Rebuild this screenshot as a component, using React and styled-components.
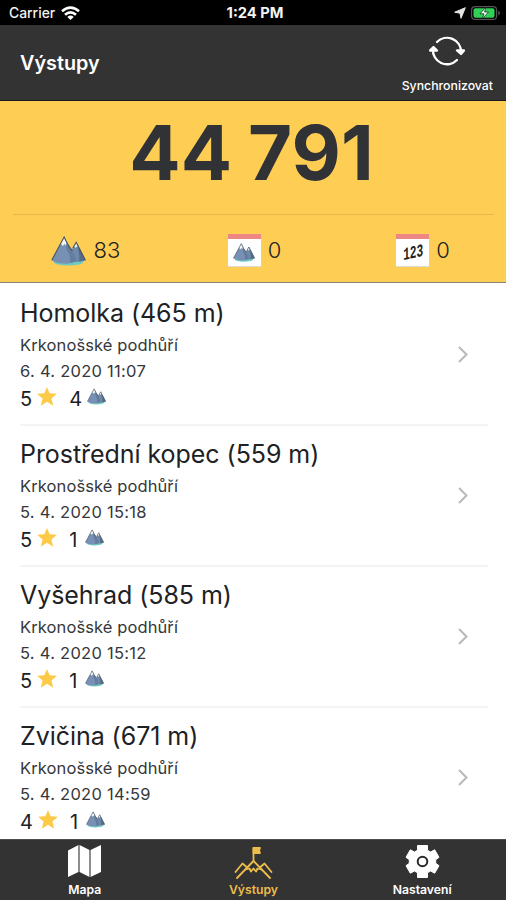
import React from 'react';
import styled, { createGlobalStyle } from 'styled-components';

const GlobalStyle = createGlobalStyle`
  * {
    box-sizing: border-box;
    margin: 0;
    padding: 0;
  }

  body {
    background: #fff;
    font-family: Inter, 'Liberation Sans', sans-serif;
    color: #202124;
  }
`;

const Screen = styled.div`
  width: 506px;
  height: 900px;
  display: flex;
  flex-direction: column;
  overflow: hidden;
  background: #fff;
`;

const StatusBar = styled.div`
  height: 25px;
  flex-shrink: 0;
  display: grid;
  grid-template-columns: 1fr auto 1fr;
  align-items: center;
  padding: 1px 5px 0 9px;
  background: #000;
  color: #f2f2f2;
  font-size: 13.9px;
  line-height: 20px;
`;

const Carrier = styled.div`
  display: flex;
  align-items: center;
  gap: 6px;
  font-weight: 500;
`;

const Clock = styled.div`
  font-weight: 700;
  font-size: 14.7px;
`;

const StatusIcons = styled.div`
  display: flex;
  align-items: center;
  justify-content: flex-end;
  gap: 5px;
`;

const Header = styled.header`
  height: 76px;
  flex-shrink: 0;
  display: flex;
  justify-content: space-between;
  padding: 0 13px 0 20px;
  background: #333;
  border-bottom: 1px solid #17161c;
  color: #fff;
`;

const PageTitle = styled.h1`
  padding-top: 26px;
  font-size: 19.8px;
  line-height: 24px;
  font-weight: 600;
`;

const SyncButton = styled.button`
  display: flex;
  flex-direction: column;
  align-items: center;
  gap: 10px;
  padding-top: 9px;
  border: 0;
  background: none;
  color: #fff;
  font: 500 12.3px/16px Inter, sans-serif;
`;

const Summary = styled.section`
  height: 182px;
  flex-shrink: 0;
  padding: 0 12px 0 13px;
  background: #fecd53;
  border-bottom: 1px solid #8d8374;
`;

const Score = styled.div`
  height: 114px;
  padding: 9px 4px 0 0;
  border-bottom: 1px solid #e5b948;
  font-size: 76px;
  line-height: 84px;
  font-weight: 700;
  word-spacing: -2px;
  text-align: center;
  color: #303236;
`;

const Stats = styled.div`
  display: grid;
  grid-template-columns: repeat(3, 1fr);
  margin: 0 -12px 0 -13px;
  height: 67px;
  padding-top: 4px;
`;

const Stat = styled.div`
  display: flex;
  align-items: center;
  justify-content: center;
  gap: 7px;
  padding-left: 3px;
  font-size: 22px;
  line-height: 30px;
  font-weight: 300;
`;

const StatValue = styled.span`
  padding-bottom: 1px;
`;

const List = styled.ul`
  flex: 1;
  min-height: 0;
  overflow: hidden;
  list-style: none;
  padding: 2px 18px 0 20px;
`;

const Ascent = styled.li`
  height: 141px;
  display: flex;
  align-items: center;
  justify-content: space-between;
  padding-right: 20px;
  border-bottom: 2px solid #f4f4f4;
`;

const AscentName = styled.h2`
  margin: -2px 0 2px;
  padding-top: 1px;
  font-size: 25px;
  line-height: 34px;
  letter-spacing: -0.05px;
  font-weight: 400;
`;

const AscentInfo = styled.p`
  font-size: 16.5px;
  line-height: 26px;
  letter-spacing: ${({ $spacing }) => $spacing || 0.1}px;
  color: #36373a;
`;

const Points = styled.div`
  display: flex;
  align-items: center;
  height: 28px;
  padding-top: 2px;
  font-size: 20px;
  line-height: 28px;
`;

const PointIcon = styled.span`
  display: flex;
  margin: 0 ${({ $right }) => $right || 0}px 5px 5px;
`;

const PeakCount = styled.span`
  min-width: 11px;
`;

const TabBar = styled.nav`
  height: 61px;
  flex-shrink: 0;
  display: grid;
  grid-template-columns: repeat(3, 1fr);
  background: #333;
  border-top: 1px solid #4e4e4e;
`;

const Tab = styled.a`
  display: flex;
  flex-direction: column;
  align-items: center;
  gap: 3px;
  padding: 4px 0 0 1px;
  color: ${({ $active }) => ($active ? '#edbd4b' : '#fff')};
  font-size: 12.2px;
  line-height: 16px;
  font-weight: 600;
`;

const WifiIcon = () => (
  <svg width="19" height="15" viewBox="0 0 19 15" fill="none" stroke="#fff" strokeWidth="2.6">
    <path d="M1 5.2Q9.5-2 18 5.2M4 8.7Q9.5 4 15 8.7" />
    <path d="M6.3 11Q9.5 8.2 12.7 11L9.5 14Z" fill="#fff" stroke="none" />
  </svg>
);

const LocationIcon = () => (
  <svg width="12" height="12" viewBox="0 0 12 12">
    <path d="M11.3.7 7 11.3 6 6.2.7 5.2Z" fill="#e3e3e3" stroke="#e3e3e3" strokeLinejoin="round" />
  </svg>
);

const BatteryIcon = () => (
  <svg width="30" height="14" viewBox="0 0 30 14">
    <rect x=".6" y=".6" width="25" height="12.8" rx="3.5" fill="none" stroke="#555" strokeWidth="1.2" />
    <rect x="2.5" y="2.3" width="21" height="9.4" rx="2" fill="#31d158" />
    <path d="M27.5 4.5Q30 7 27.5 9.5Z" fill="#777" />
    <path d="M15 1 9 7.8h4L11 13l6.5-7h-4Z" fill="#fff" stroke="#0c3518" strokeWidth=".8" />
  </svg>
);

const SyncIcon = () => (
  <svg width="36" height="34" viewBox="0 0 36 34" fill="none" stroke="#fff" strokeWidth="2.3" strokeLinecap="round" strokeLinejoin="round">
    <path d="M8 8A14 14 0 0 1 32 18M28 26A14 14 0 0 1 4 15" />
    <path d="M28 16.5h7L32 20ZM1 16.5h7L4.5 13Z" fill="#fff" />
  </svg>
);

const MountainIcon = ({ width = 35, height = 30 }) => (
  <svg width={width} height={height} viewBox="0 0 36 31">
    <ellipse cx="18" cy="26.5" rx="15.5" ry="4" fill="#6fcac1" />
    <path d="M18 20 26 6.5 35.5 25Q29 28 20 26Z" fill="#6e89ac" />
    <path d="M26 6.5 35.5 25 29 26Q30 17 26 6.5Z" fill="#526b87" />
    <path d="M.7 25 13.5 1Q18 11 22 15L26.5 25Q22 29 13 28.5 6 28.5.7 25Z" fill="#7890b4" />
    <path d="M13.5 1Q18 11 22 15l4.5 10q-3 3-7 3 1-8-3-13Z" fill="#647d9e" />
    <path d="m13.5 1-4.2 8 1.8-.5 1 2 1.7-2.5 1.6 2L16 7Z" fill="#f6f7f7" />
    <path d="m26 6.5-2.7 5 1.3-.5 1 1.5 1.2-1.8 1 .5Z" fill="#edf1f3" />
    <path d="M.7 25 13.5 1Q18 11 22 15M22.5 12.5l3.5-6L35.5 25" fill="none" stroke="#46545b" strokeWidth="1.1" />
  </svg>
);

const StarIcon = () => (
  <svg width="20" height="19" viewBox="0 0 19 18">
    <path d="m9.5 0 2.5 5.9 6.9.5-5.2 4.4 1.7 6.9-5.9-3.6-5.9 3.6 1.7-6.9L.1 6.4 7 5.9Z" fill="#fdca48" />
  </svg>
);

const Calendar = styled.div`
  width: 33px;
  height: 33px;
  display: flex;
  align-items: center;
  justify-content: center;
  background: #fff;
  border-top: 5px solid #ee8783;
  border-bottom: 1px solid #dedbd3;
`;

const CalendarDays = styled.span`
  font: 700 18px/20px 'Liberation Mono', monospace;
  color: #222;
  transform: scaleX(.62) skewY(-8deg);
`;

const ChevronIcon = () => (
  <svg width="10" height="17" viewBox="0 0 10 17" fill="none" stroke="#b9b9bb" strokeWidth="2">
    <path d="m1 1 7.5 7.5L1 16" />
  </svg>
);

const MapIcon = () => (
  <svg width="33" height="35" viewBox="0 0 33 35">
    <path d="M0 6.5 10.5 1v27L0 33ZM11.5 1l10 5v27l-10-5ZM22.5 6 33 1v27l-10.5 5Z" fill="#fff" />
    <path d="M11 1v27M22 6v27" stroke="#8b8b8b" strokeWidth="1.5" />
  </svg>
);

const SummitIcon = () => (
  <svg width="39" height="35" viewBox="0 0 39 35" fill="none" stroke="currentColor" strokeWidth="1.8" strokeLinecap="round" strokeLinejoin="round">
    <path d="M1.5 28 8.5 19.5l3.5 3M3 34 19.5 17 36 34M27 22.5l3.5-3 7 8.5" />
    <path d="m11.5 25.5 4-1 1.5 3 2.5-3 2.5 3 1.5-3 4 1M19.5 17V4" />
    <path d="M19.5 4h6.5l-1 2.3 1 2.7h-6.5Z" fill="currentColor" />
  </svg>
);

const SettingsIcon = () => (
  <svg width="35" height="35" viewBox="0 0 35 35">
    <path d="M12.5 1.5h10v4.7l3 1.8 4.2-2.2 4.3 7.5-3.3 2.4v3.6l3.3 2.4-4.3 7.5-4.2-2.2-3 1.8v4.7h-10v-4.7l-3-1.8-4.2 2.2L1 21.7l3.3-2.4v-3.6L1 13.3l4.3-7.5L9.5 8l3-1.8Z" fill="#fff" stroke="#fff" strokeLinejoin="round" />
    <circle cx="17.5" cy="17.5" r="4.8" fill="#fff" stroke="#292929" strokeWidth="2" />
  </svg>
);

const ascents = [
  { name: 'Homolka (465 m)', date: '6. 4. 2020 11:07', stars: 5, peaks: 4 },
  { name: 'Prostřední kopec (559 m)', date: '5. 4. 2020 15:18', stars: 5, peaks: 1 },
  { name: 'Vyšehrad (585 m)', date: '5. 4. 2020 15:12', stars: 5, peaks: 1 },
  { name: 'Zvičina (671 m)', date: '5. 4. 2020 14:59', stars: 4, peaks: 1 }
];

const App = () => (
  <>
    <GlobalStyle />
    <Screen>
      <StatusBar>
        <Carrier>Carrier <WifiIcon /></Carrier>
        <Clock>1:24 PM</Clock>
        <StatusIcons><LocationIcon /><BatteryIcon /></StatusIcons>
      </StatusBar>
      <Header>
        <PageTitle>Výstupy</PageTitle>
        <SyncButton><SyncIcon />Synchronizovat</SyncButton>
      </Header>
      <Summary>
        <Score>44 791</Score>
        <Stats>
          <Stat><MountainIcon /><StatValue>83</StatValue></Stat>
          <Stat>
            <Calendar><MountainIcon width={22} height={19} /></Calendar>
            <StatValue>0</StatValue>
          </Stat>
          <Stat>
            <Calendar><CalendarDays>123</CalendarDays></Calendar>
            <StatValue>0</StatValue>
          </Stat>
        </Stats>
      </Summary>
      <List>
        {ascents.map((ascent) => (
          <Ascent key={ascent.name}>
            <div>
              <AscentName>{ascent.name}</AscentName>
              <AscentInfo>Krkonošské podhůří</AscentInfo>
              <AscentInfo $spacing={0.27}>{ascent.date}</AscentInfo>
              <Points>
                {ascent.stars}<PointIcon $right={12}><StarIcon /></PointIcon>
                <PeakCount>{ascent.peaks}</PeakCount>
                <PointIcon><MountainIcon width={19} height={17} /></PointIcon>
              </Points>
            </div>
            <ChevronIcon />
          </Ascent>
        ))}
      </List>
      <TabBar>
        <Tab><MapIcon />Mapa</Tab>
        <Tab $active><SummitIcon />Výstupy</Tab>
        <Tab><SettingsIcon />Nastavení</Tab>
      </TabBar>
    </Screen>
  </>
);

export default App;
